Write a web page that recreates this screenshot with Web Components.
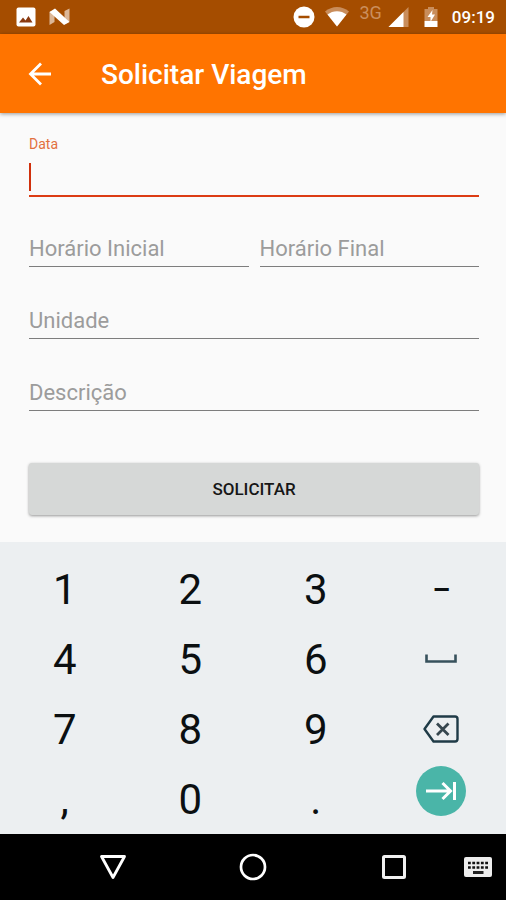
<!DOCTYPE html>
<html lang="pt-BR">
<head>
<meta charset="utf-8">
<meta name="viewport" content="width=device-width, initial-scale=1">
<title>Solicitar Viagem</title>
<style>
  body {
    margin: 0;
    min-height: 100vh;
    display: flex;
    flex-direction: column;
    background: #fafafa;
    font-family: Roboto, "Liberation Sans", sans-serif;
  }

  trip-form {
    flex: 1;
  }
</style>
</head>
<body>
  <status-bar time="09:19"></status-bar>
  <app-header>Solicitar Viagem</app-header>
  <trip-form></trip-form>
  <num-keyboard></num-keyboard>
  <nav-bar></nav-bar>

<script>
class StatusBar extends HTMLElement {
  constructor() {
    super();
    const shadow = this.attachShadow({ mode: 'open' });

    shadow.innerHTML = `
      <style>
        :host {
          display: flex;
          align-items: center;
          justify-content: space-between;
          height: 34px;
          padding: 0 11px 0 16px;
          background: #a54d00;
          color: #fff;
        }

        div {
          display: flex;
          align-items: center;
        }

        svg {
          display: block;
        }

        .left {
          gap: 13px;
        }

        .right {
          gap: 10px;
        }

        .mobile {
          display: flex;
          gap: 6px;
        }

        .net {
          align-self: flex-start;
          font-size: 18px;
          line-height: 14px;
          color: #cb8f5d;
        }

        time {
          font-size: 17px;
          font-weight: 500;
          line-height: 20px;
        }
      </style>
      <div class="left">
        <svg width="20" height="20" viewBox="0 0 20 20">
          <rect x="0.5" y="0.5" width="19" height="19" rx="2" fill="#fff"/>
          <path d="M3 15.500l4-5 2.500 3 3-4.500 4 6.500z" fill="#8a3a10"/>
        </svg>
        <svg width="21" height="18" viewBox="0 0 21 18">
          <path d="M0.500 4v13l5-3V2zM15.500 3l5-2.500v13l-5 3z" fill="#dcb797"/>
          <path d="M0.500 4L6 0.500 20.500 14l-5.500 3z" fill="#fff"/>
        </svg>
      </div>
      <div class="right">
        <svg width="22" height="22" viewBox="0 0 22 22">
          <circle cx="11" cy="11" r="10.500" fill="#fff"/>
          <path d="M5.500 11h11" stroke="#a54d00" stroke-width="2.500"/>
        </svg>
        <svg width="24" height="20" viewBox="0 0 24 20">
          <path d="M0 4.500C7-1.500 17-1.500 24 4.500L12 19.500z" fill="#c98d5b"/>
          <path d="M2.500 7.500C8 3 16 3 21.500 7.500L12 19.500z" fill="#fff"/>
        </svg>
        <div class="mobile">
          <span class="net">3G</span>
          <svg width="22" height="22" viewBox="0 0 22 22">
            <path d="M20.500 1v20H0.500z" fill="#c98d5b"/>
            <path d="M15.500 6v15H0.500z" fill="#fff"/>
          </svg>
        </div>
        <svg width="22" height="22" viewBox="0 0 22 22">
          <path d="M4.500 3h3.500V1h6v2h3.500v12h-13z" fill="#c98d5b"/>
          <path d="M4.500 15h13v6h-13z" fill="#fff"/>
          <path d="M12.500 4L7.500 11h3v5l4.500-7.500h-3z" fill="#fff"/>
        </svg>
        <time>${this.getAttribute('time')}</time>
      </div>
    `;
  }
}

class AppHeader extends HTMLElement {
  constructor() {
    super();
    const shadow = this.attachShadow({ mode: 'open' });

    shadow.innerHTML = `
      <style>
        :host {
          display: block;
          position: relative;
          background: #ff7400;
          color: #fff;
          box-shadow: 0 1px 4px rgba(0, 0, 0, 0.4);
        }

        header {
          display: flex;
          align-items: center;
          gap: 49px;
          height: 79px;
          padding: 0 28px;
        }

        button {
          display: flex;
          padding: 0;
          border: 0;
          background: none;
        }

        h1 {
          margin: 0;
          padding-top: 2px;
          font-size: 28px;
          font-weight: 500;
          line-height: 32px;
        }
      </style>
      <header>
        <button type="button" aria-label="Voltar">
          <svg width="24" height="24" viewBox="0 0 24 24">
            <path d="M23 12H3M13 1.500L2.500 12 13 22.500" fill="none" stroke="#fff" stroke-width="2.800"/>
          </svg>
        </button>
        <h1><slot></slot></h1>
      </header>
    `;
  }
}

class TextField extends HTMLElement {
  constructor() {
    super();
    const shadow = this.attachShadow({ mode: 'open' });

    shadow.innerHTML = `
      <style>
        :host {
          display: grid;
          grid-template-rows: 18px 44px;
        }

        input {
          grid-area: 2 / 1;
          box-sizing: border-box;
          width: 100%;
          height: 42px;
          margin: 0;
          padding: 12px 0 5px;
          border: 0;
          border-bottom: 1px solid #7d7d7d;
          border-radius: 0;
          outline: 0;
          background: none;
          color: #212121;
          font: inherit;
          font-size: 22px;
        }

        label {
          grid-area: 2 / 1;
          padding-top: 12px;
          font-size: 22px;
          line-height: 24px;
          color: #9c9c9c;
        }

        .caret {
          display: none;
        }

        /* focused: label floats above the line */
        :host([active]) label {
          grid-area: 1 / 1;
          padding: 0;
          font-size: 14px;
          line-height: 18px;
          color: #e2703f;
        }

        :host([active]) input {
          height: 44px;
          border-bottom: 2px solid #dc3c14;
          caret-color: transparent;
        }

        :host([active]) .caret {
          display: block;
          grid-area: 2 / 1;
          align-self: end;
          width: 2px;
          height: 28px;
          margin-bottom: 6px;
          background: #d0300c;
        }
      </style>
      <label for="field">${this.getAttribute('label')}</label>
      <input id="field" type="text">
      <span class="caret"></span>
    `;
  }
}

class RaisedButton extends HTMLElement {
  constructor() {
    super();
    const shadow = this.attachShadow({ mode: 'open' });

    shadow.innerHTML = `
      <style>
        :host {
          display: block;
        }

        button {
          width: 100%;
          height: 52px;
          padding: 0;
          border: 0;
          border-radius: 3px;
          background: #d6d8d7;
          box-shadow: 0 1px 3px rgba(0, 0, 0, 0.4);
          color: #161616;
          font: inherit;
          font-size: 17px;
          font-weight: 500;
          text-transform: uppercase;
        }
      </style>
      <button type="button"><slot></slot></button>
    `;
  }
}

class TripForm extends HTMLElement {
  constructor() {
    super();
    const shadow = this.attachShadow({ mode: 'open' });

    shadow.innerHTML = `
      <style>
        :host {
          display: block;
          padding: 22px 27px 27px 29px;
        }

        form {
          display: flex;
          flex-direction: column;
          gap: 10px;
        }

        .row {
          display: grid;
          grid-template-columns: 1fr 1fr;
          gap: 11px;
        }

        raised-button {
          margin-top: 40px;
        }
      </style>
      <form>
        <text-field label="Data" active></text-field>
        <div class="row">
          <text-field label="Horário Inicial"></text-field>
          <text-field label="Horário Final"></text-field>
        </div>
        <text-field label="Unidade"></text-field>
        <text-field label="Descrição"></text-field>
        <raised-button>SOLICITAR</raised-button>
      </form>
    `;
  }
}

class NumKeyboard extends HTMLElement {
  constructor() {
    super();
    const shadow = this.attachShadow({ mode: 'open' });

    shadow.innerHTML = `
      <style>
        :host {
          display: grid;
          grid-template-columns: repeat(4, 1fr);
          grid-auto-rows: 70px;
          padding: 12px 2px 0;
          background: #eceff1;
        }

        button {
          display: flex;
          align-items: center;
          justify-content: center;
          padding: 0;
          border: 0;
          background: none;
          color: #0b0f11;
          font: inherit;
          font-size: 42px;
        }

        .dash {
          font-size: 28px;
          font-weight: 700;
        }

        .next {
          align-self: start;
          justify-self: center;
          width: 50px;
          height: 50px;
          margin-top: 2px;
          border-radius: 50%;
          background: #4ab5a8;
        }
      </style>
      <button type="button">1</button>
      <button type="button">2</button>
      <button type="button">3</button>
      <button type="button" class="dash">–</button>
      <button type="button">4</button>
      <button type="button">5</button>
      <button type="button">6</button>
      <button type="button" aria-label="Espaço">
        <svg width="32" height="10" viewBox="0 0 32 10">
          <path d="M1.500 0.500v7h29v-7" fill="none" stroke="#37515c" stroke-width="2.600"/>
        </svg>
      </button>
      <button type="button">7</button>
      <button type="button">8</button>
      <button type="button">9</button>
      <button type="button" aria-label="Apagar">
        <svg width="36" height="28" viewBox="0 0 36 28">
          <path d="M10.500 1.500H32q2.500 0 2.500 2.500v20q0 2.500-2.500 2.500H10.500L1.500 14z" fill="none" stroke="#1f3b47" stroke-width="2.400" stroke-linejoin="round"/>
          <path d="M14 8.500l11.500 11.500M25.500 8.500L14 20" stroke="#37474f" stroke-width="2.800"/>
        </svg>
      </button>
      <button type="button">,</button>
      <button type="button">0</button>
      <button type="button">.</button>
      <button type="button" class="next" aria-label="Próximo">
        <svg width="32" height="20" viewBox="0 0 32 20">
          <path d="M1 10h24M17.500 2l8 8-8 8M29.500 1v18" fill="none" stroke="#fff" stroke-width="3"/>
        </svg>
      </button>
    `;
  }
}

class NavBar extends HTMLElement {
  constructor() {
    super();
    const shadow = this.attachShadow({ mode: 'open' });

    shadow.innerHTML = `
      <style>
        :host {
          display: block;
          background: #000;
        }

        nav {
          display: grid;
          grid-template-columns: 43px repeat(3, 1fr) 29px;
          align-items: center;
          height: 66px;
          padding-right: 13px;
        }

        button {
          display: flex;
          justify-content: center;
          padding: 0;
          border: 0;
          background: none;
        }

        button:first-child {
          grid-column: 2;
        }
      </style>
      <nav>
        <button type="button" aria-label="Voltar">
          <svg width="28" height="26" viewBox="0 0 28 26">
            <path d="M2.500 2.500h23L14 23.500z" fill="none" stroke="#fff" stroke-width="2.800" stroke-linejoin="round"/>
          </svg>
        </button>
        <button type="button" aria-label="Início">
          <svg width="28" height="28" viewBox="0 0 28 28">
            <circle cx="14" cy="14" r="12" fill="none" stroke="#fff" stroke-width="2.700"/>
          </svg>
        </button>
        <button type="button" aria-label="Recentes">
          <svg width="26" height="26" viewBox="0 0 26 26">
            <rect x="2.500" y="2.500" width="21" height="21" rx="1" fill="none" stroke="#f0f0f0" stroke-width="3"/>
          </svg>
        </button>
        <button type="button" aria-label="Teclado">
          <svg width="28" height="20" viewBox="0 0 28 20">
            <rect width="28" height="20" rx="2" fill="#ededed"/>
            <path d="M4 6h20M4 10.500h20" stroke="#111" stroke-width="2.600" stroke-dasharray="2.800 1.500"/>
            <path d="M9 15.500h10.500" stroke="#222" stroke-width="3"/>
          </svg>
        </button>
      </nav>
    `;
  }
}

customElements.define('status-bar', StatusBar);
customElements.define('app-header', AppHeader);
customElements.define('text-field', TextField);
customElements.define('raised-button', RaisedButton);
customElements.define('trip-form', TripForm);
customElements.define('num-keyboard', NumKeyboard);
customElements.define('nav-bar', NavBar);
</script>
</body>
</html>
